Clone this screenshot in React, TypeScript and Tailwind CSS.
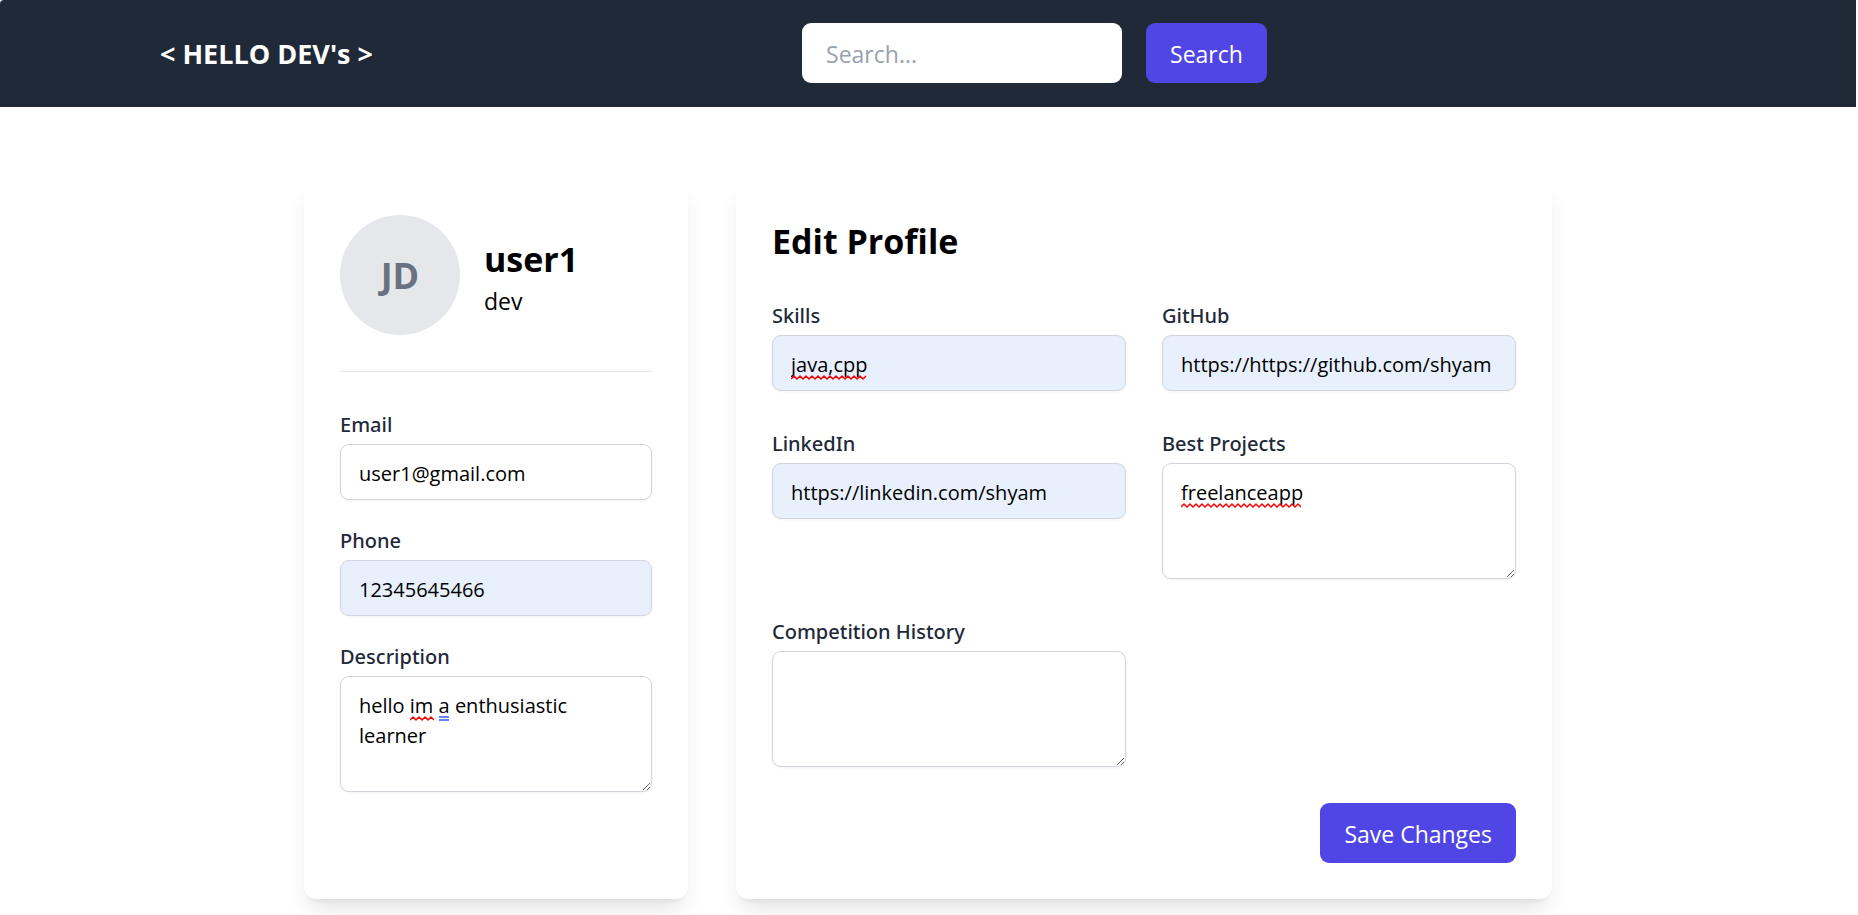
import React, { useId } from "react";
import clsx from "clsx";

const fieldClass =
  "block w-full rounded-[9px] border border-gray-300 px-[18px] pt-[14px] pb-[10px] text-[20px] leading-[30px] text-black shadow-[0_1px_3px_rgb(0_0_0/0.05)] outline-none";

/** Red zigzag drawn under a misspelt word. */
function Squiggle({ width }: { width: number }) {
  const steps = Math.floor(width / 3);
  const d =
    "M0 4" +
    Array.from({ length: steps }, (_, i) => `l3 ${i % 2 === 0 ? -3 : 3}`).join("");
  return (
    <svg width={width} height="5" viewBox={`0 0 ${width} 5`} className="block" aria-hidden="true">
      <path d={d} fill="none" stroke="#f00505" strokeWidth="1.5" strokeLinejoin="round" />
    </svg>
  );
}

/** Blue double line drawn under a grammar hint. */
function GrammarMark({ width }: { width: number }) {
  return (
    <svg width={width} height="5" viewBox={`0 0 ${width} 5`} className="block" aria-hidden="true">
      <path d={`M0 1H${width}M0 4H${width}`} stroke="#2f5cf5" strokeWidth="1.5" />
    </svg>
  );
}

type FieldProps = {
  label: string;
  value?: string;
  type?: string;
  multiline?: boolean;
  filled?: boolean;
  children?: React.ReactNode;
};

function Field({ label, value, type = "text", multiline, filled, children }: FieldProps) {
  const id = useId();
  return (
    <div>
      <label
        htmlFor={id}
        className="block pt-0.5 font-['Noto_Sans','Open_Sans',sans-serif] text-[20px] leading-[30px] font-medium text-gray-800"
      >
        {label}
      </label>
      <div className="relative mt-1">
        {multiline ? (
          <textarea
            id={id}
            rows={3}
            spellCheck={false}
            defaultValue={value}
            className={clsx(fieldClass, "bg-white")}
          />
        ) : (
          <input
            id={id}
            type={type}
            spellCheck={false}
            defaultValue={value}
            className={clsx(fieldClass, filled ? "bg-[#e8f0fe]" : "bg-white")}
          />
        )}
        {children}
      </div>
    </div>
  );
}

const primaryButton =
  "h-[60px] cursor-pointer rounded-[9px] bg-[#4f46e5] px-6 pt-0.5 text-[23px] leading-9 text-white";

export default function App() {
  return (
    <div className="min-h-screen bg-white pr-0.5 font-['Open_Sans','Noto_Sans',sans-serif] text-black">
      <header className="rounded-tl-[4px] bg-[#1f2937] pt-[23px] pb-6">
        <div className="mx-auto flex max-w-[1536px] items-center justify-between">
          <a href="#" className="pt-0.5 text-[27px] leading-9 font-bold text-white">
            &lt; HELLO DEV's &gt;
          </a>
          <form className="flex gap-6" onSubmit={(e) => e.preventDefault()}>
            <input
              type="search"
              aria-label="Search"
              placeholder="Search..."
              className="h-[60px] w-80 rounded-[9px] bg-white px-6 pt-0.5 text-[23px] leading-9 text-black outline-none placeholder:text-gray-400"
            />
            <button type="submit" className={primaryButton}>
              Search
            </button>
          </form>
          <div />
        </div>
      </header>

      <main className="mx-auto grid max-w-[1344px] grid-cols-3 gap-12 px-12 pt-[72px] pb-12">
        <section className="rounded-xl bg-white p-9 shadow-[0_15px_23px_-5px_rgb(0_0_0/0.1),0_6px_9px_-6px_rgb(0_0_0/0.1)]">
          <div className="flex items-center gap-6">
            <div className="flex size-[120px] shrink-0 items-center justify-center rounded-full bg-gray-200 pt-0.5 text-[36px] leading-[48px] font-bold text-gray-500">
              JD
            </div>
            <div className="pt-1">
              <h2 className="text-[34px] leading-[48px] font-bold">user1</h2>
              <p className="text-[23px] leading-9">dev</p>
            </div>
          </div>
          <hr className="my-9 border-gray-200" />
          <div className="flex flex-col gap-6">
            <Field label="Email" type="email" value="user1@gmail.com" />
            <Field label="Phone" type="tel" value="12345645466" filled />
            <Field label="Description" value={"hello im a enthusiastic learner"} multiline>
              <span className="pointer-events-none absolute top-10 left-[70px]">
                <Squiggle width={24} />
              </span>
              <span className="pointer-events-none absolute top-10 left-[99px]">
                <GrammarMark width={10} />
              </span>
            </Field>
          </div>
        </section>

        <section className="col-span-2 rounded-xl bg-white p-9 shadow-[0_15px_23px_-5px_rgb(0_0_0/0.1),0_6px_9px_-6px_rgb(0_0_0/0.1)]">
          <h1 className="pt-0.5 text-[34px] leading-[48px] font-bold">Edit Profile</h1>
          <form onSubmit={(e) => e.preventDefault()}>
            <div className="mt-[34px] grid grid-cols-2 gap-9">
              <Field label="Skills" value="java,cpp" filled>
                <span className="pointer-events-none absolute top-10 left-[19px]">
                  <Squiggle width={76} />
                </span>
              </Field>
              <Field label="GitHub" value="https://https://github.com/shyam" filled />
              <Field label="LinkedIn" value="https://linkedin.com/shyam" filled />
              <Field label="Best Projects" value="freelanceapp" multiline>
                <span className="pointer-events-none absolute top-10 left-[19px]">
                  <Squiggle width={120} />
                </span>
              </Field>
              <Field label="Competition History" multiline />
            </div>
            <div className="mt-9 flex justify-end">
              <button type="submit" className={primaryButton}>
                Save Changes
              </button>
            </div>
          </form>
        </section>
      </main>
    </div>
  );
}
